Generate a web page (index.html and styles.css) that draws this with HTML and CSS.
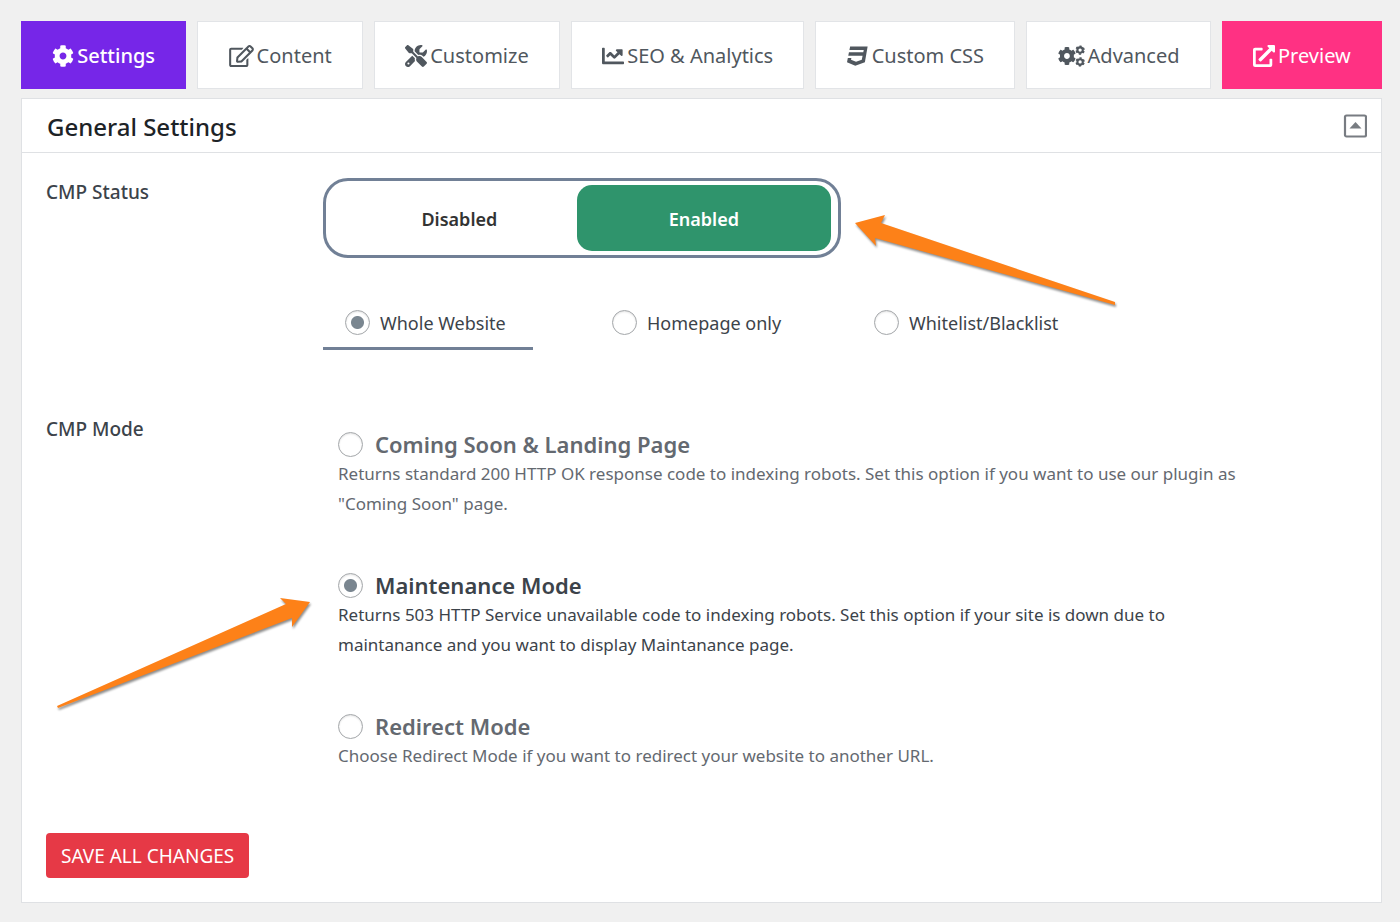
FILE: index.html
```html
<!DOCTYPE html>
<html lang="en">
<head>
<meta charset="utf-8">
<title>CMP Settings</title>
<link rel="stylesheet" href="styles.css">
</head>
<body>
<svg class="defs" aria-hidden="true">
  <symbol id="cog" viewBox="0 0 512 512"><path d="M487.4 315.7l-42.6-24.6c4.3-23.2 4.3-47 0-70.2l42.6-24.6c4.9-2.8 7.1-8.6 5.5-14-11.1-35.6-30-67.8-54.7-94.6-3.8-4.1-10-5.1-14.8-2.3L380.8 110c-17.9-15.4-38.5-27.3-60.8-35.1V25.8c0-5.6-3.9-10.5-9.4-11.7-36.7-8.2-74.3-7.8-109.2 0-5.5 1.2-9.4 6.1-9.4 11.7V75c-22.2 7.9-42.8 19.8-60.8 35.1L88.7 85.5c-4.9-2.8-11-1.9-14.8 2.3-24.7 26.7-43.6 58.9-54.7 94.6-1.7 5.4.6 11.2 5.5 14L67.3 221c-4.3 23.2-4.3 47 0 70.2l-42.6 24.6c-4.9 2.8-7.1 8.6-5.5 14 11.1 35.6 30 67.8 54.7 94.6 3.8 4.1 10 5.1 14.8 2.3l42.6-24.6c17.9 15.4 38.5 27.3 60.8 35.1v49.2c0 5.6 3.9 10.5 9.4 11.7 36.7 8.2 74.3 7.8 109.2 0 5.5-1.2 9.4-6.1 9.4-11.7v-49.2c22.2-7.9 42.8-19.8 60.8-35.1l42.6 24.6c4.9 2.8 11 1.9 14.8-2.3 24.7-26.7 43.6-58.9 54.7-94.6 1.5-5.5-.7-11.3-5.6-14.1zM256 336c-44.1 0-80-35.9-80-80s35.9-80 80-80 80 35.9 80 80-35.9 80-80 80z"/></symbol>
  <symbol id="cog-small" viewBox="0 0 232 232"><circle cx="116" cy="116" r="64" fill="none" stroke="currentColor" stroke-width="50"/><circle cx="116" cy="116" r="94" fill="none" stroke="currentColor" stroke-width="36" stroke-dasharray="52 46.430" stroke-dashoffset="-23"/></symbol>
</svg>

<nav class="tabs" aria-label="Plugin sections">
  <button class="tab tab-active" type="button">
    <svg class="icon" viewBox="0 0 512 512" aria-hidden="true"><use href="#cog"/></svg>Settings
  </button>
  <button class="tab" type="button">
    <svg class="icon icon-wide" viewBox="0 0 576 512" aria-hidden="true"><path d="M402.3 344.9l32-32c5-5 13.7-1.5 13.7 5.7V464c0 26.5-21.5 48-48 48H48c-26.5 0-48-21.5-48-48V112c0-26.5 21.5-48 48-48h273.5c7.1 0 10.7 8.6 5.7 13.7l-32 32c-1.5 1.5-3.5 2.3-5.7 2.3H48v352h352V350.5c0-2.1.8-4.1 2.3-5.6zm156.6-201.8L296.3 405.7l-90.4 10c-26.2 2.9-48.5-19.2-45.6-45.6l10-90.4L432.9 17.1c22.9-22.9 59.9-22.9 82.7 0l43.2 43.2c22.9 22.9 22.9 60 .1 82.8zM460.1 174L402 115.9 216.2 301.8l-7.3 65.3 65.3-7.3L460.1 174zm64.8-79.7l-43.2-43.2c-4.1-4.1-10.8-4.1-14.8 0L436 82l58.1 58.1 30.9-30.9c4-4.2 4-10.8-.1-14.9z"/></svg>Content
  </button>
  <button class="tab" type="button">
    <svg class="icon" viewBox="0 0 512 512" aria-hidden="true"><path d="M78.6 5C69.1-2.4 55.6-1.5 47 7L7 47c-8.500 8.500-9.400 22-2.100 31.600l80 104c4.500 5.900 11.600 9.400 19 9.400h54.100l109 109c-14.700 29-10 65.400 14.300 89.600l112 112c12.500 12.500 32.800 12.500 45.300 0l64-64c12.500-12.500 12.500-32.800 0-45.300l-112-112c-24.200-24.200-60.600-29-89.600-14.300l-109-109V104c0-7.500-3.500-14.500-9.400-19L78.600 5zM19.900 396.100C7.200 408.800 0 426.100 0 444.100C0 481.600 30.400 512 67.900 512c18 0 35.300-7.200 48-19.900L233.700 374.300c-7.800-20.900-9-43.600-3.600-65.100l-61.700-61.700L19.900 396.100zM512 144c0-10.500-1.100-20.700-3.200-30.500c-2.400-11.200-16.100-14.100-24.200-6l-63.900 63.900c-3 3-7.100 4.700-11.300 4.700H352c-8.800 0-16-7.200-16-16V102.600c0-4.200 1.700-8.300 4.700-11.300l63.900-63.900c8.100-8.100 5.200-21.800-6-24.200C388.700 1.100 378.500 0 368 0C288.500 0 224 64.500 224 144l0 .8 85.300 85.300c36-9.100 75.800 .5 104 28.700L429 274.500c49-23 83-72.800 83-130.500zM56 432a24 24 0 1 1 48 0 24 24 0 1 1-48 0z"/></svg>Customize
  </button>
  <button class="tab" type="button">
    <svg class="icon" viewBox="0 0 512 512" aria-hidden="true"><path d="M496 384H64V80c0-8.84-7.16-16-16-16H16C7.16 64 0 71.16 0 80v336c0 17.67 14.33 32 32 32h464c8.84 0 16-7.16 16-16v-32c0-8.84-7.16-16-16-16zM464 96H345.94c-21.38 0-32.09 25.85-16.97 40.97l32.4 32.4L288 242.75l-73.37-73.37c-12.5-12.5-32.76-12.5-45.25 0l-68.69 68.69c-6.25 6.25-6.25 16.38 0 22.63l22.62 22.62c6.25 6.25 16.38 6.25 22.63 0L192 237.25l73.37 73.37c12.5 12.5 32.76 12.5 45.25 0l96-96 32.4 32.4c15.12 15.12 40.97 4.41 40.97-16.97V112c.01-8.84-7.15-16-15.99-16z"/></svg>SEO &amp; Analytics
  </button>
  <button class="tab" type="button">
    <svg class="icon" viewBox="0 0 512 512" aria-hidden="true"><path d="M480 32l-64 368-223.3 80L0 400l19.6-94.8h82l-8 40.6L210 390.2l134.1-44.4 18.8-97.1H29.5l16-82h333.7l10.5-52.7H56.3l16.3-82H480z"/></svg>Custom CSS
  </button>
  <button class="tab" type="button">
    <svg class="icon icon-cogs" viewBox="0 0 640 512" aria-hidden="true"><use href="#cog" x="-8" y="36" width="440" height="440"/><use href="#cog-small" x="408" y="0" width="232" height="232"/><use href="#cog-small" x="408" y="280" width="232" height="232"/></svg>Advanced
  </button>
  <a class="tab tab-preview" href="#preview">
    <svg class="icon" viewBox="0 0 512 512" aria-hidden="true"><path d="M432,320H400a16,16,0,0,0-16,16V448H64V128H208a16,16,0,0,0,16-16V80a16,16,0,0,0-16-16H48A48,48,0,0,0,0,112V464a48,48,0,0,0,48,48H400a48,48,0,0,0,48-48V336A16,16,0,0,0,432,320ZM488,0h-128c-21.37,0-32.05,25.91-17,41l35.73,35.73L135,320.37a24,24,0,0,0,0,34L157.67,377a24,24,0,0,0,34,0L435.28,133.32,471,169c15,15,41,4.5,41-17V24A24,24,0,0,0,488,0Z"/></svg>Preview
  </a>
</nav>

<main class="panel">
  <header class="panel-header">
    <h1 class="panel-title">General Settings</h1>
    <button class="collapse" type="button" aria-label="Collapse General Settings">
      <svg viewBox="0 0 24 24" width="24" height="24" aria-hidden="true"><rect x="2" y="1.500" width="21" height="21" rx="1.500" fill="none" stroke="currentColor" stroke-width="2.200"/><path d="M6.500 14.500L12.500 8l6 6.500z" fill="currentColor"/></svg>
    </button>
  </header>

  <form class="settings">
    <section class="row">
      <h2 class="row-label">CMP Status</h2>
      <div class="row-body">
        <div class="switch">
          <button class="switch-item" type="button" aria-pressed="false">Disabled</button>
          <button class="switch-item switch-on" type="button" aria-pressed="true">Enabled</button>
          <svg class="arrow arrow-status" viewBox="0 0 262 92" aria-hidden="true"><path d="M0 8L30 0L26 8L260 87V90L20 23L21 31z"/></svg>
        </div>
        <div class="scopes">
          <label class="scope scope-on"><input class="radio" type="radio" name="scope" checked>Whole Website</label>
          <label class="scope"><input class="radio" type="radio" name="scope">Homepage only</label>
          <label class="scope"><input class="radio" type="radio" name="scope">Whitelist/Blacklist</label>
        </div>
      </div>
    </section>

    <section class="row">
      <h2 class="row-label">CMP Mode</h2>
      <div class="row-body modes">
        <div class="mode">
          <label class="mode-title"><input class="radio" type="radio" name="mode">Coming Soon &amp; Landing Page</label>
          <p class="mode-text">Returns standard 200 HTTP OK response code to indexing robots. Set this option if you want to use our plugin as "Coming Soon" page.</p>
        </div>
        <div class="mode mode-on">
          <label class="mode-title"><input class="radio" type="radio" name="mode" checked>Maintenance Mode</label>
          <p class="mode-text">Returns 503 HTTP Service unavailable code to indexing robots. Set this option if your site is down due to maintanance and you want to display Maintanance page.</p>
          <svg class="arrow arrow-mode" viewBox="0 0 256 114" aria-hidden="true"><path d="M1 109L230 7L224 1L254 5L236 30V21L2 111z"/></svg>
        </div>
        <div class="mode">
          <label class="mode-title"><input class="radio" type="radio" name="mode">Redirect Mode</label>
          <p class="mode-text">Choose Redirect Mode if you want to redirect your website to another URL.</p>
        </div>
      </div>
    </section>

    <button class="save" type="submit">SAVE ALL CHANGES</button>
  </form>
</main>
</body>
</html>
```
FILE: styles.css
```css
* {
  box-sizing: border-box;
}

body {
  margin: 0;
  padding: 21px 18px 19px 21px;
  background: #f0f0f0;
  color: #3c434a;
  font-family: "Noto Sans", "Open Sans", sans-serif;
  font-size: 18px;
  line-height: 30px;
}

button {
  font-family: inherit;
  cursor: pointer;
}

.defs {
  display: none;
}

.tabs {
  display: flex;
  gap: 11px;
  margin-bottom: 9px;
}

.tab {
  display: flex;
  flex: 1 1 auto;
  align-items: center;
  justify-content: center;
  gap: 3px;
  height: 68px;
  padding: 2px 24px 0;
  border: 1px solid #e2e4e7;
  background: #fff;
  color: #50575e;
  font-size: 20px;
  line-height: 30px;
  text-decoration: none;
  white-space: nowrap;
}

.tab-active {
  border-color: #7626e8;
  background: #7626e8;
  color: #fff;
  font-weight: 500;
}

.tab-preview {
  border-color: #ff3183;
  background: #ff3183;
  color: #fff;
}

.icon {
  flex: none;
  width: 22px;
  height: 22px;
  fill: currentColor;
}

.icon-wide {
  width: 25px;
}

.icon-cogs {
  width: 27px;
}

.panel {
  border: 1px solid #dfe1e4;
  background: #fff;
}

.panel-header {
  display: flex;
  align-items: center;
  justify-content: space-between;
  height: 54px;
  padding: 0 14px 0 25px;
  border-bottom: 1px solid #dfe1e4;
}

.panel-title {
  margin: 0;
  padding-top: 2px;
  color: #1d2327;
  font-size: 24px;
  font-weight: 500;
}

.collapse {
  display: flex;
  padding: 0;
  border: 0;
  background: none;
  color: #787c82;
}

.settings {
  padding: 25px 24px 24px;
}

.row {
  display: grid;
  grid-template-columns: 277px 1fr;
}

.row-label {
  margin: 0;
  font-size: 19px;
  font-weight: 500;
  line-height: 28px;
}

.switch {
  position: relative;
  display: flex;
  max-width: 518px;
  height: 80px;
  padding: 4px 7px 4px 16px;
  border: 3px solid #718096;
  border-radius: 25px;
}

.switch-item {
  flex: 0 0 52%;
  padding-top: 3px;
  border: 0;
  border-radius: 15px;
  background: none;
  color: #333;
  font-size: 18px;
  font-weight: 600;
}

.switch-item:first-child {
  flex: 1 1 0;
}

.switch-on {
  background: #2f946c;
  color: #fff;
}

.scopes {
  display: grid;
  grid-template-columns: 267px 262px auto;
  justify-items: start;
  margin: 40px 0 65px;
}

.scope {
  display: flex;
  align-items: center;
  gap: 10px;
  min-width: 210px;
  height: 52px;
  padding: 0 22px;
  border-bottom: 3px solid transparent;
}

.scope-on {
  border-bottom-color: #718096;
}

.radio {
  flex: none;
  appearance: none;
  width: 25px;
  height: 25px;
  margin: 0;
  border: 1px solid #a4a7aa;
  border-radius: 50%;
  background: #fff;
  box-shadow: inset 0 1px 2px rgba(0, 0, 0, 0.12);
}

.radio:checked {
  background: radial-gradient(circle, #7a8690 0 6px, #fff 7px);
}

.modes {
  display: grid;
  gap: 51px;
  padding: 14px 0 62px 15px;
}

.mode {
  position: relative;
  max-width: 920px;
  color: #646970;
}

.mode-on {
  color: #3c434a;
}

.mode-title {
  display: flex;
  align-items: center;
  gap: 12px;
  font-size: 22px;
  font-weight: 600;
}

.mode-text {
  margin: 0;
  font-size: 17px;
  line-height: 30px;
}

.arrow {
  position: absolute;
  overflow: visible;
  fill: #fd8118;
  filter: drop-shadow(1px 2px 1px rgba(0, 0, 0, 0.45));
}

.arrow-status {
  top: 34px;
  left: calc(100% + 17px);
  width: 262px;
}

.arrow-mode {
  top: 27px;
  right: calc(100% + 26px);
  width: 256px;
}

.save {
  display: block;
  height: 45px;
  padding: 0 15px;
  border: 0;
  border-radius: 4px;
  background: #e63946;
  color: #fff;
  font-size: 19px;
}
```
